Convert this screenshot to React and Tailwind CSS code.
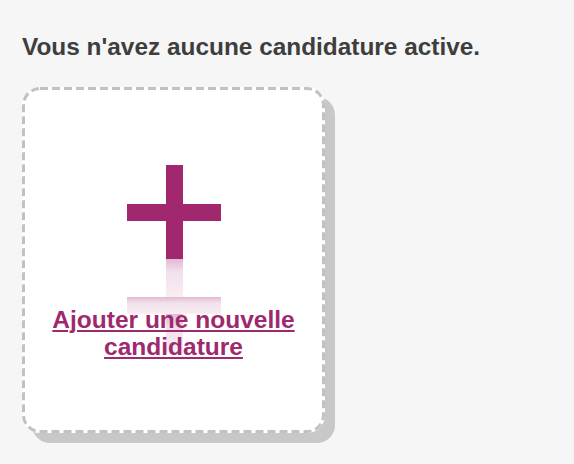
import React from "react";

function Cross() {
  return (
    <svg width="94" height="188" viewBox="0 0 94 188" className="block">
      <defs>
        <linearGradient id="refl" x1="0" y1="0" x2="0" y2="1">
          <stop offset="0" stopColor="#a1286f" stopOpacity="0.32" />
          <stop offset="0.35" stopColor="#a1286f" stopOpacity="0.14" />
          <stop offset="1" stopColor="#a1286f" stopOpacity="0.08" />
        </linearGradient>
      </defs>
      <rect x="39" y="0" width="17" height="94" fill="#a1286f" />
      <rect x="0" y="39" width="94" height="17" fill="#a1286f" />
      <g fill="url(#refl)">
        <rect x="39" y="94" width="17" height="38" />
        <rect x="0" y="132" width="94" height="17" />
        <rect x="39" y="149" width="17" height="39" />
      </g>
    </svg>
  );
}

export default function App() {
  return (
    <div
      className="min-h-screen bg-[#f6f6f6] pl-[22px] pt-[33px]"
      style={{ fontFamily: '"Liberation Sans", Arial, sans-serif' }}
    >
      <h1 className="text-[24.4px] leading-[27px] font-bold text-[#3e3e3e]">
        Vous n'avez aucune candidature active.
      </h1>
      <div className="relative mt-[27px] w-[303px] h-[346px] rounded-[18px] bg-white shadow-[10px_10px_0_#c8c8c8] flex flex-col items-center pt-[78px]">
        <svg
          className="absolute inset-0 pointer-events-none"
          width="303"
          height="346"
          viewBox="0 0 303 346"
        >
          <rect
            x="1.5"
            y="1.5"
            width="300"
            height="343"
            rx="16.5"
            fill="none"
            stroke="#c2c2c2"
            strokeWidth="3"
            strokeDasharray="8 4"
          />
        </svg>
        <div className="ml-[1px]">
          <Cross />
        </div>
        <a
          href="#"
          className="relative mt-[-47px] text-center text-[24.5px] leading-[27px] font-bold text-[#9e296d] underline decoration-2 underline-offset-[2px]"
        >
          Ajouter une nouvelle candidature
        </a>
      </div>
    </div>
  );
}
